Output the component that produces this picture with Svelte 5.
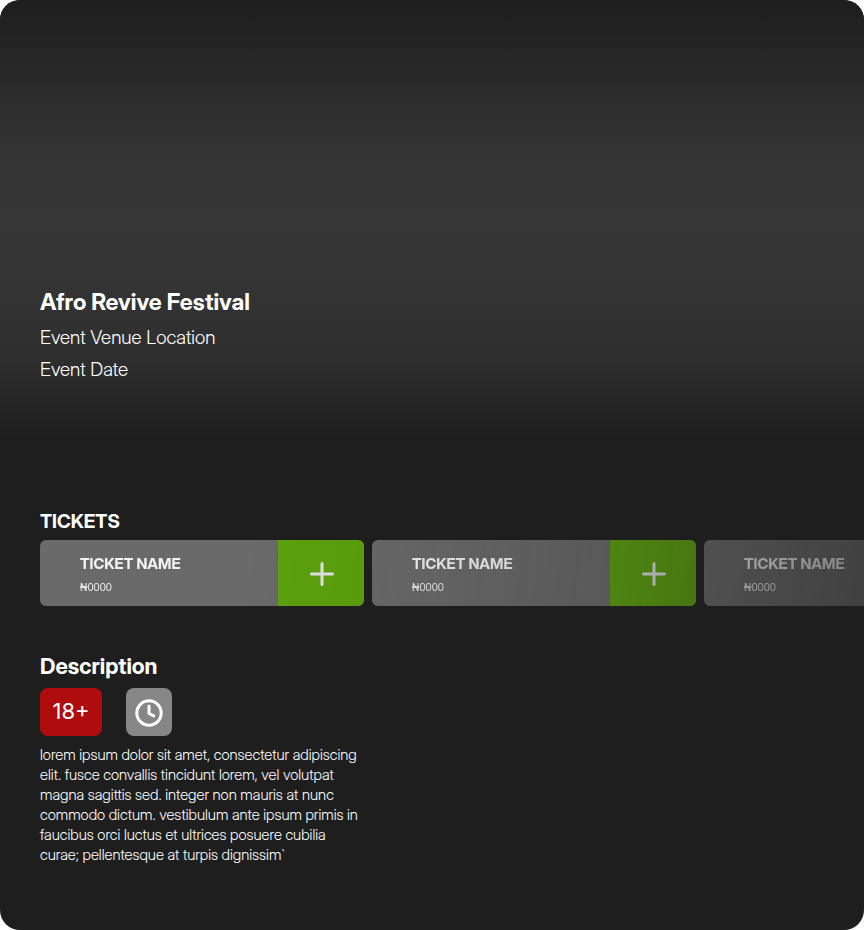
<script>
  const event = {
    name: 'Afro Revive Festival',
    venue: 'Event Venue Location',
    date: 'Event Date'
  };

  const tickets = [
    { id: 1, name: 'TICKET NAME', price: '₦0000' },
    { id: 2, name: 'TICKET NAME', price: '₦0000' },
    { id: 3, name: 'TICKET NAME', price: '₦0000' }
  ];
</script>

<main class="page">
  <header class="hero">
    <h1>{event.name}</h1>
    <p>{event.venue}</p>
    <p>{event.date}</p>
  </header>

  <section class="tickets">
    <h2>TICKETS</h2>
    <ul class="ticket-row">
      {#each tickets as ticket (ticket.id)}
        <li class="ticket">
          <div class="ticket-info">
            <h3>{ticket.name}</h3>
            <p>{ticket.price}</p>
          </div>
          <button class="add" type="button" aria-label="Add ticket">
            <svg width="24" height="24" viewBox="0 0 24 24" aria-hidden="true">
              <path d="M12 1.5v21M1.5 12h21" fill="none" stroke="currentColor" stroke-width="3" stroke-linecap="round" />
            </svg>
          </button>
        </li>
      {/each}
    </ul>
  </section>

  <section class="description">
    <h2>Description</h2>
    <div class="badges">
      <span class="badge age">18+</span>
      <span class="badge time">
        <svg width="28" height="28" viewBox="0 0 28 28" aria-hidden="true">
          <g fill="none" stroke="currentColor" stroke-width="3" stroke-linecap="round" stroke-linejoin="round">
            <circle cx="14" cy="14" r="12.2" />
            <path d="M14 7v7.5l4.8 2.4" />
          </g>
        </svg>
      </span>
    </div>
    <p class="copy">
      lorem ipsum dolor sit amet, consectetur adipiscing elit. fusce convallis tincidunt lorem, vel volutpat magna
      sagittis sed. integer non mauris at nunc commodo dictum. vestibulum ante ipsum primis in faucibus orci luctus et
      ultrices posuere cubilia curae; pellentesque at turpis dignissim`
    </p>
  </section>
</main>

<style>
  :global(body) {
    margin: 0;
    background: #ffffff;
  }

  .page {
    box-sizing: border-box;
    min-height: 100vh;
    padding-bottom: 64px;
    overflow: hidden;
    border-radius: 20px;
    background: #1e1e1e;
    color: #ffffff;
    font-family: 'Inter Display', 'Inter', sans-serif;
  }

  h1,
  h2,
  h3,
  p,
  ul {
    margin: 0;
    padding: 0;
  }

  .hero {
    box-sizing: border-box;
    min-height: 440px;
    padding: 0 40px 58px;
    display: flex;
    flex-direction: column;
    justify-content: flex-end;
    gap: 8px;
    background: linear-gradient(#1e1e1e, #2e2e2e 25%, #353535 38%, #373737 50%, #353535 62%, #2e2e2e 82%, #1e1e1e);
  }

  h1 {
    font-size: 23px;
    line-height: 32px;
    font-weight: 700;
  }

  .hero p {
    font-size: 19px;
    line-height: 24px;
    font-weight: 300;
  }

  .tickets {
    padding: 70px 0 0 40px;
  }

  h2 {
    font-size: 19px;
    line-height: 24px;
    font-weight: 700;
  }

  .ticket-row {
    margin-top: 6px;
    display: flex;
    gap: 8px;
    overflow: hidden;
    list-style: none;
    mask-image: linear-gradient(97deg, #000 24%, rgb(0 0 0 / 0.95) 40%, rgb(0 0 0 / 0.78) 69%, rgb(0 0 0 / 0.46));
  }

  .ticket {
    flex: 0 0 324px;
    height: 66px;
    display: flex;
    overflow: hidden;
    border-radius: 6px;
    background: #6a6a6a;
  }

  .ticket-info {
    flex: 1;
    padding: 14px 0 0 40px;
    color: #f4f4f4;
  }

  .ticket-info h3 {
    font-size: 15px;
    line-height: 20px;
    font-weight: 700;
  }

  .ticket-info p {
    margin-top: 7px;
    font-size: 10px;
    line-height: 12px;
    font-weight: 400;
  }

  .add {
    flex: 0 0 86px;
    padding: 2px 0 0 2px;
    display: flex;
    align-items: center;
    justify-content: center;
    border: 0;
    background: #5ca20d;
    color: #e4e4e4;
    cursor: pointer;
  }

  .description {
    padding: 46px 40px 0;
  }

  .description h2 {
    font-size: 22px;
    line-height: 28px;
  }

  .badges {
    margin-top: 8px;
    display: flex;
    gap: 24px;
  }

  .badge {
    box-sizing: border-box;
    height: 48px;
    display: flex;
    align-items: center;
    justify-content: center;
    border-radius: 8px;
  }

  .age {
    width: 62px;
    padding-bottom: 2px;
    background: #af0d0d;
    font-family: 'Inter', sans-serif;
    font-size: 22px;
    line-height: 28px;
  }

  .time {
    width: 46px;
    padding-top: 2px;
    background: #868686;
  }

  .copy {
    max-width: 326px;
    margin-top: 9px;
    font-size: 15px;
    line-height: 20px;
    font-weight: 300;
  }
</style>
